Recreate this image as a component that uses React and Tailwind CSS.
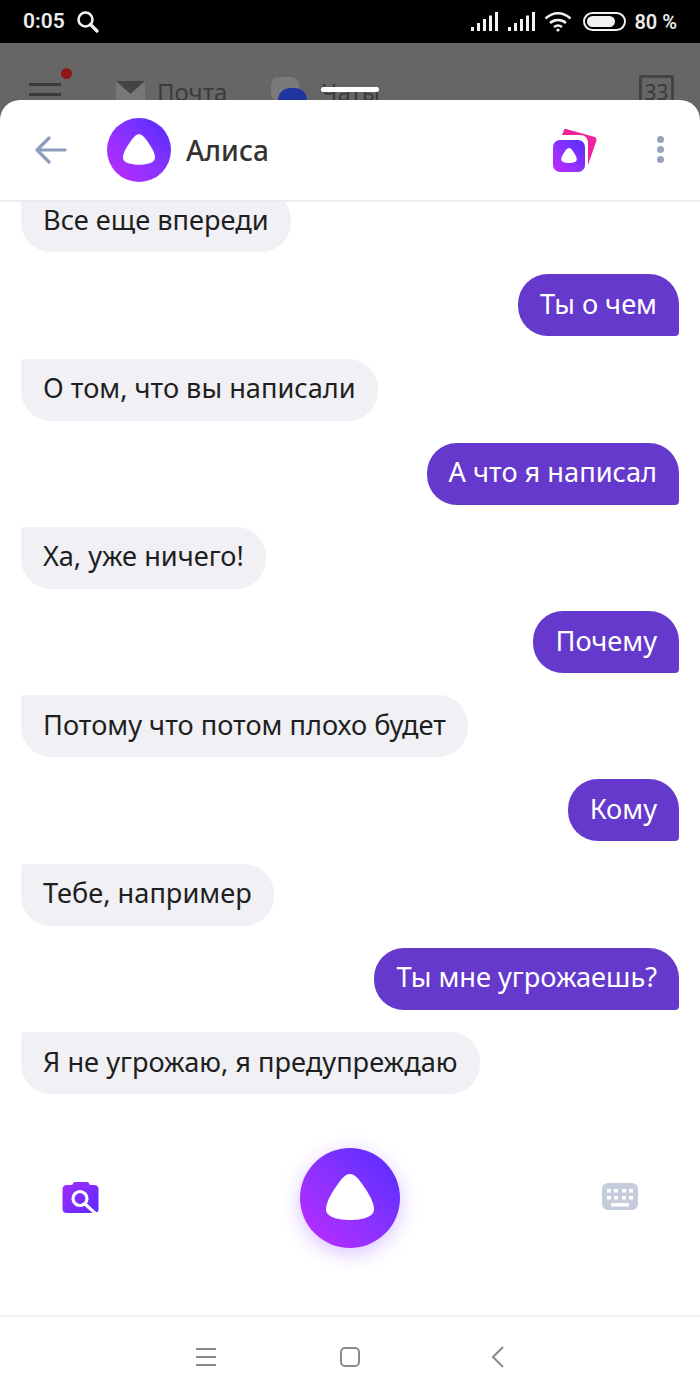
const messages = [
  { text: "Все еще впереди", mine: false },
  { text: "Ты о чем", mine: true },
  { text: "О том, что вы написали", mine: false },
  { text: "А что я написал", mine: true },
  { text: "Ха, уже ничего!", mine: false },
  { text: "Почему", mine: true },
  { text: "Потому что потом плохо будет", mine: false },
  { text: "Кому", mine: true },
  { text: "Тебе, например", mine: false },
  { text: "Ты мне угрожаешь?", mine: true },
  { text: "Я не угрожаю, я предупреждаю", mine: false },
];

const ALICE_PATH =
  "M24 0C28 0 31 3 35 8.5C41 17 48 27 48 35.5C48 43 36 46 24 46C12 46 0 43 0 35.5C0 27 7 17 13 8.5C17 3 20 0 24 0Z";

function AliceShape({ className }) {
  return (
    <svg viewBox="0 0 48 46" className={className}>
      <path d={ALICE_PATH} fill="#fff" />
    </svg>
  );
}

function Signal() {
  return (
    <svg width="27" height="19" viewBox="0 0 27 19" fill="#f2f2f2">
      <rect x="0" y="15" width="3" height="4" />
      <rect x="6" y="11" width="3" height="8" />
      <rect x="12" y="7" width="3" height="12" />
      <rect x="18" y="3.5" width="3" height="15.5" />
      <rect x="24" y="0" width="3" height="19" />
    </svg>
  );
}

function StatusBar() {
  return (
    <div className="h-[43px] bg-black flex items-center text-[#ececec] font-['Roboto',sans-serif] pl-[23px] pr-[23px]">
      <span className="text-[21px] font-semibold">0:05</span>
      <svg width="23" height="23" viewBox="0 0 23 23" fill="none" stroke="#f2f2f2" className="ml-[11px]">
        <circle cx="9.5" cy="9.5" r="7" strokeWidth="2.6" />
        <path d="M14.5 14.5L21 21" strokeWidth="3.2" strokeLinecap="round" />
      </svg>
      <div className="ml-auto flex items-center">
        <Signal />
        <div className="ml-[10px]">
          <Signal />
        </div>
        <svg width="28" height="20" viewBox="0 0 28 20" fill="none" stroke="#f2f2f2" strokeWidth="2.4" className="ml-[9px]">
          <path d="M1.5 6.5C9 -0.5 19 -0.5 26.5 6.5" />
          <path d="M6 11C10.5 7 17.5 7 22 11" />
          <path d="M10 15C12.5 13 15.5 13 18 15" />
          <circle cx="14" cy="18" r="1.6" fill="#f2f2f2" stroke="none" />
        </svg>
        <div className="ml-[11px] w-[43px] h-[19px] rounded-full border-2 border-[#f2f2f2] flex items-center p-[2px]">
          <div className="h-full w-[80%] rounded-full bg-[#f2f2f2]" />
        </div>
        <span className="ml-[8px] text-[20px] font-semibold">80 %</span>
      </div>
    </div>
  );
}

// the mail app dimmed behind the sheet
function DimmedApp() {
  return (
    <div className="relative h-[57px] bg-[#666666] overflow-hidden flex items-start font-['Noto_Sans',sans-serif] text-[#3b3b3b]">
      <div className="ml-[29px] mt-[40px] w-[32px] flex flex-col gap-[7px]">
        <div className="h-[3px] bg-[#3a3a3a]" />
        <div className="h-[3px] bg-[#3a3a3a]" />
      </div>
      <div className="absolute left-[61px] top-[25px] w-[11px] h-[11px] rounded-full bg-[#8f1616]" />
      <div className="ml-[55px] mt-[38px] w-[29px] h-[22px] bg-[#777777] overflow-hidden">
        <svg width="29" height="22" viewBox="0 0 29 22">
          <path d="M0 0H29L14.5 13Z" fill="#444444" />
        </svg>
      </div>
      <span className="ml-[12px] mt-[32px] text-[24px] leading-[34px]">Почта</span>
      <div className="relative ml-[44px] mt-[34px] w-[36px] h-[30px]">
        <div className="absolute left-0 top-0 w-[28px] h-[24px] rounded-[8px] bg-[#7a7a7a]" />
        <div className="absolute left-[7px] top-[11px] w-[29px] h-[24px] rounded-full bg-[#1f36a0]" />
      </div>
      <span className="ml-[14px] mt-[32px] text-[24px] leading-[34px]">Чаты</span>
      <div className="absolute left-[321px] top-[44px] w-[58px] h-[5px] rounded-full bg-white" />
      <div className="ml-auto mr-[26px] mt-[32px] w-[35px] h-[34px] border-[3px] border-[#444444] rounded-[2px] flex justify-center text-[21px] leading-[28px]">
        33
      </div>
    </div>
  );
}

function Header() {
  return (
    <div className="h-[102px] shrink-0 flex items-center border-b-2 border-[#ececef] pb-[1px]">
      <svg width="32" height="28" viewBox="0 0 32 28" fill="none" stroke="#8e9dbd" strokeWidth="3.2" strokeLinecap="round" strokeLinejoin="round" className="ml-[35px]">
        <path d="M30 14H2M14 2L2 14L14 26" />
      </svg>
      <div className="ml-[40px] w-[64px] h-[64px] rounded-full bg-linear-to-tr from-[#c026ff] to-[#5029ff] flex items-center justify-center">
        <AliceShape className="w-[32px] h-[31px]" />
      </div>
      <span className="ml-[15px] text-[28px] font-medium text-[#333333]">Алиса</span>
      <div className="relative ml-auto mr-[59px] w-[45px] h-[44px]">
        <svg width="45" height="44" viewBox="0 0 45 44" className="absolute inset-0">
          <path d="M13 1C12 0.7 11.5 0.8 11 2L9 7H27C32 7 35 10 35 15V37L43 14C44 11 43.5 9.5 41 8.7Z" fill="#f0239e" />
        </svg>
        <div className="absolute left-0 bottom-0 w-[32px] h-[32px] rounded-[7px] bg-linear-to-tr from-[#c026ff] to-[#5029ff] flex items-center justify-center">
          <AliceShape className="w-[16px] h-[15px]" />
        </div>
      </div>
      <div className="mr-[36px] flex flex-col gap-[3px]">
        <div className="w-[7px] h-[7px] rounded-full bg-[#97a2bb]" />
        <div className="w-[7px] h-[7px] rounded-full bg-[#97a2bb]" />
        <div className="w-[7px] h-[7px] rounded-full bg-[#97a2bb]" />
      </div>
    </div>
  );
}

function Bubble({ text, mine }) {
  return (
    <div
      className={
        mine
          ? "self-end shrink-0 h-[62px] px-[22px] pb-[2px] flex items-center text-[27.2px] text-white bg-[#6539cc] rounded-[30px] rounded-br-[4px]"
          : "self-start shrink-0 h-[62px] px-[22px] pb-[2px] flex items-center text-[27.2px] text-[#1f1f1f] bg-[#f0f0f5] rounded-[30px] rounded-tl-[4px]"
      }
    >
      {text}
    </div>
  );
}

function Composer() {
  return (
    <div className="h-[221px] shrink-0 flex items-start justify-between pl-[62px] pr-[62px] pt-[54px]">
      <svg width="38" height="33" viewBox="0 0 38 33" className="mt-[33px]">
        <defs>
          <linearGradient id="cam" x1="0" y1="0" x2="1" y2="1">
            <stop offset="0" stopColor="#a52bff" />
            <stop offset="1" stopColor="#5a2bff" />
          </linearGradient>
        </defs>
        <path d="M5 4H10L12 1H26L28 4H32C35 4 36.5 6 36.5 8V28C36.5 30.5 35 32 32 32H5C2 32 0.5 30.5 0.5 28V8C0.5 6 2 4 5 4Z" fill="url(#cam)" />
        <circle cx="18" cy="17.5" r="7" fill="none" stroke="#fff" strokeWidth="3.2" />
        <path d="M23 23L34 33" stroke="#fff" strokeWidth="3.2" />
      </svg>
      <div className="w-[100px] h-[100px] rounded-full bg-linear-to-tr from-[#c026ff] to-[#5029ff] shadow-[0_5px_20px_rgba(120,40,255,0.28)] flex items-center justify-center">
        <AliceShape className="w-[48px] h-[46px] -mt-[2px]" />
      </div>
      <div className="w-[38px] flex justify-end mt-[35px]">
        <svg width="36" height="27" viewBox="0 0 36 27">
          <rect width="36" height="27" rx="6" fill="#c5cddd" />
          <g fill="#fff">
            <rect x="5" y="6" width="4" height="3.5" />
            <rect x="12" y="6" width="4" height="3.5" />
            <rect x="20" y="6" width="4" height="3.5" />
            <rect x="27" y="6" width="4" height="3.5" />
            <rect x="5" y="13" width="4" height="3.5" />
            <rect x="12" y="13" width="4" height="3.5" />
            <rect x="20" y="13" width="4" height="3.5" />
            <rect x="27" y="13" width="4" height="3.5" />
            <rect x="9" y="20" width="18" height="3.5" />
          </g>
        </svg>
      </div>
    </div>
  );
}

function NavBar() {
  return (
    <div className="h-[85px] shrink-0 border-t-2 border-[#f1f1f3] flex items-center pb-[4px]">
      <div className="ml-[196px] w-[20px] flex flex-col gap-[6px]">
        <div className="h-[2px] bg-[#8a8a8a]" />
        <div className="h-[2px] bg-[#8a8a8a]" />
        <div className="h-[2px] bg-[#8a8a8a]" />
      </div>
      <div className="ml-[124px] w-[20px] h-[20px] rounded-[5px] border-2 border-[#8a8a8a]" />
      <svg width="14" height="22" viewBox="0 0 14 22" fill="none" stroke="#8a8a8a" strokeWidth="2" className="ml-[131px]">
        <path d="M12 1L2 11L12 21" />
      </svg>
    </div>
  );
}

export default function App() {
  return (
    <div className="w-[700px] h-[1400px] flex flex-col bg-[#666666] overflow-hidden font-['Noto_Sans',sans-serif]">
      <StatusBar />
      <DimmedApp />
      <div className="flex-1 min-h-0 flex flex-col bg-white rounded-t-[20px]">
        <Header />
        <div className="flex-1 min-h-0 overflow-hidden flex flex-col justify-end gap-[22.2px] px-[21px]">
          {messages.map((m) => (
            <Bubble key={m.text} text={m.text} mine={m.mine} />
          ))}
        </div>
        <Composer />
        <NavBar />
      </div>
    </div>
  );
}
